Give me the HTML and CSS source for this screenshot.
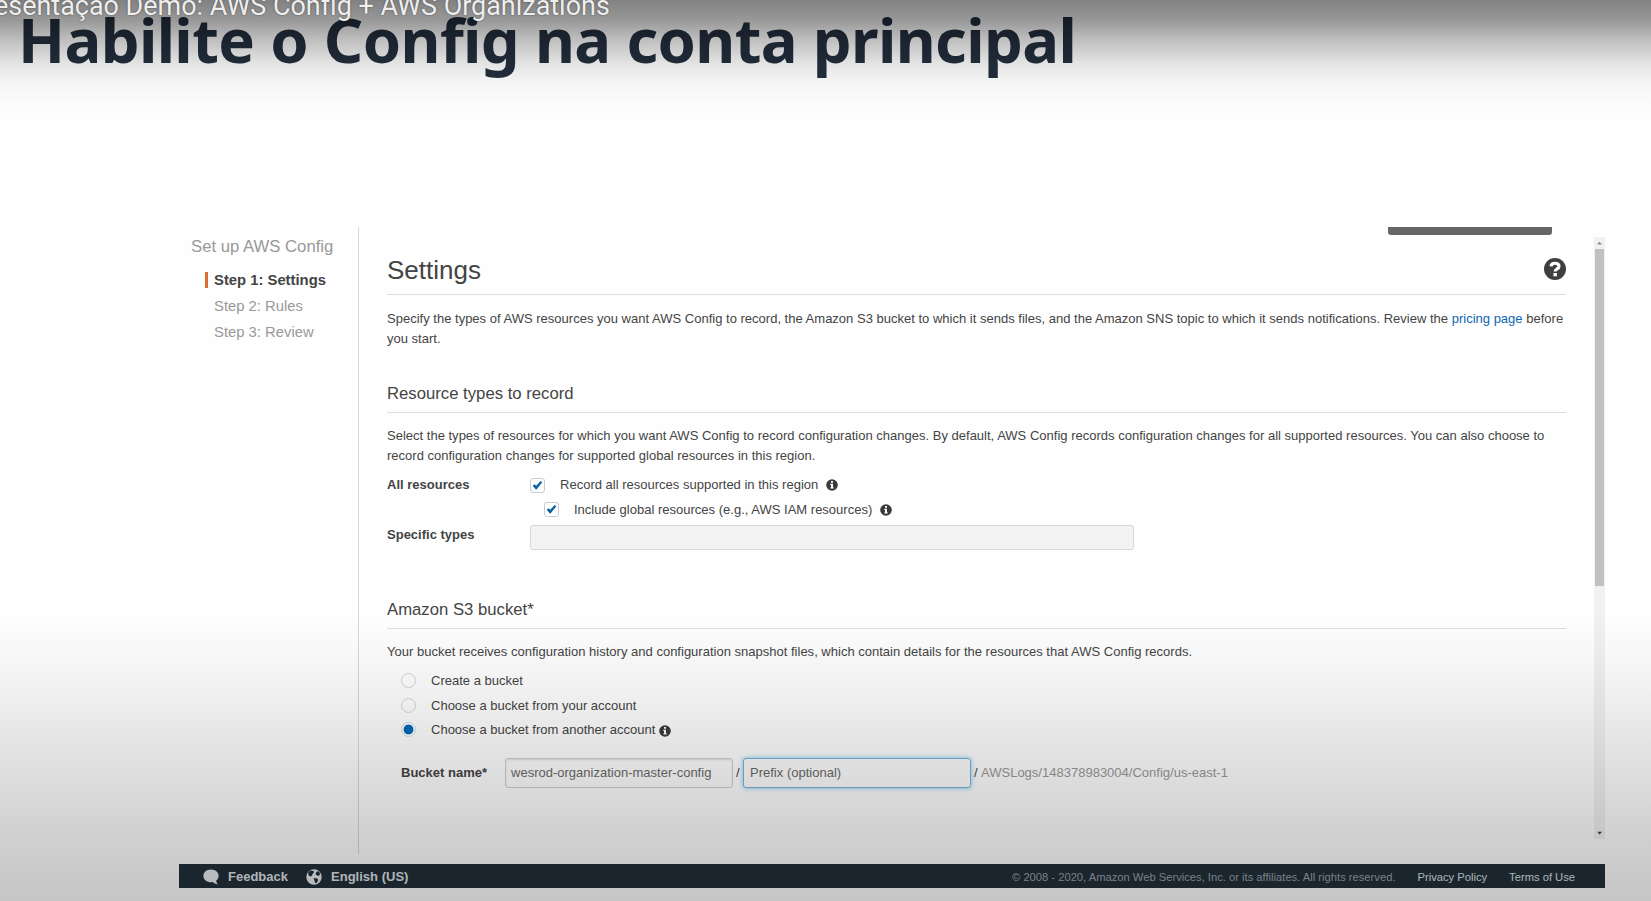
FILE: index.html
```html
<!DOCTYPE html>
<html lang="pt">
<head>
<meta charset="utf-8">
<title>AWS Config + AWS Organizations</title>
<link rel="stylesheet" href="styles.css">
</head>
<body>
<svg class="defs" width="0" height="0">
  <symbol id="info" viewBox="0 0 12 12"><circle cx="6" cy="6" r="5.8" fill="#3a3a3a"/><path d="M5 2h2v1.7H5zM4.3 4.8H7v3.6h.8v1.2H4.3V8.4H5V6h-.7z" fill="#fff"/></symbol>
  <symbol id="check" viewBox="0 0 11 11"><path d="M.8 5.700 2.700 4.300 4.200 5.700 8.600.9 10.300 2.200 4.500 9.600H3.800z" fill="#0a62a5"/></symbol>
</svg>
<div class="slide">
  <h1 class="slide-title">Habilite o Config na conta principal</h1>
  <div class="console">
    <div class="workspace">
      <nav class="steps">
        <div class="steps-title">Set up AWS Config</div>
        <ul class="steps-list">
          <li class="step step-current">Step 1: Settings</li>
          <li class="step">Step 2: Rules</li>
          <li class="step">Step 3: Review</li>
        </ul>
      </nav>
      <main class="content">
        <div class="tab-remnant"></div>
        <header class="page-head">
          <h2 class="page-title">Settings</h2>
          <svg class="help" viewBox="0 0 22 22"><circle cx="11" cy="11" r="11" fill="#3f3f3f"/><path d="M7 8.3C7.2 6 8.8 5.3 11 5.3c2.400 0 4 1.200 4 3.100 0 2.600-3.900 2.400-3.900 5.200" fill="none" stroke="#fff" stroke-width="3.100"/><path d="M9.400 15h3.500v3.300H9.400z" fill="#fff"/></svg>
        </header>
        <p class="text intro">Specify the types of AWS resources you want AWS Config to record, the Amazon S3 bucket to which it sends files, and the Amazon SNS topic to which it sends notifications. Review the <a class="link">pricing page</a> before<br>you start.</p>
        <h3 class="section-title">Resource types to record</h3>
        <p class="text types-text">Select the types of resources for which you want AWS Config to record configuration changes. By default, AWS Config records configuration changes for all supported resources. You can also choose to<br>record configuration changes for supported global resources in this region.</p>
        <div class="field-grid">
          <div class="field-label">All resources</div>
          <div class="checks">
            <label class="check-row"><span class="box"><svg class="tick"><use href="#check"/></svg></span><span>Record all resources supported in this region</span><svg class="info"><use href="#info"/></svg></label>
            <label class="check-row nested"><span class="box"><svg class="tick"><use href="#check"/></svg></span><span>Include global resources (e.g., AWS IAM resources)</span><svg class="info"><use href="#info"/></svg></label>
          </div>
          <div class="field-label">Specific types</div>
          <div class="types-input"></div>
        </div>
        <h3 class="section-title">Amazon S3 bucket*</h3>
        <p class="text bucket-text">Your bucket receives configuration history and configuration snapshot files, which contain details for the resources that AWS Config records.</p>
        <div class="radios">
          <label class="radio-row"><span class="radio"></span><span>Create a bucket</span></label>
          <label class="radio-row"><span class="radio"></span><span>Choose a bucket from your account</span></label>
          <label class="radio-row"><span class="radio radio-on"></span><span>Choose a bucket from another account</span><svg class="info info-low"><use href="#info"/></svg></label>
        </div>
        <div class="bucket-row">
          <span class="bucket-label">Bucket name*</span>
          <span class="input">wesrod-organization-master-config</span>
          <span class="slash">/</span>
          <span class="input input-focus">Prefix (optional)</span>
          <span class="slash">/</span>
          <span class="path">AWSLogs/148378983004/Config/us-east-1</span>
        </div>
      </main>
      <div class="scrollbar">
        <svg class="arrow" viewBox="0 0 11 12"><path d="M3 7.500h5L5.500 4.700z" fill="#8a8a8a"/></svg>
        <div class="thumb"></div>
        <svg class="arrow arrow-down" viewBox="0 0 11 12"><path d="M3.200 4.700h4.800L5.600 7.600z" fill="#404040"/></svg>
      </div>
    </div>
    <footer class="footer">
      <svg class="foot-icon" viewBox="0 0 16 16"><path d="M8 .5c4.400 0 7.600 2.800 7.600 6.300 0 2.400-1.200 4-2.600 5l1.600 3.700c-2-.3-3.800-1.200-4.900-2.400C4.400 13.700.4 10.900.4 6.900.4 3.300 3.600.5 8 .5z" fill="#e9ecee"/></svg>
      <span class="foot-main foot-feedback">Feedback</span>
      <svg class="foot-icon" viewBox="0 0 16 16"><circle cx="8" cy="8" r="7.700" fill="#e9ecee"/><path d="M2.200 3 4.500 1.500 7.500 2 8 3.500 6.500 5 6 6.800 4.200 7.500 2.500 6.200zM10 3.500l2-1.500 2 2-.5 2.500-2 .3-1.800-1.400zM7.500 9l3.800.5 1 1.500-1.800 3.300-1.500-.6-.5-2.200z" fill="#222f39"/></svg>
      <span class="foot-main">English (US)</span>
      <span class="copyright">© 2008 - 2020, Amazon Web Services, Inc. or its affiliates. All rights reserved.</span>
      <a class="foot-link privacy">Privacy Policy</a>
      <a class="foot-link">Terms of Use</a>
    </footer>
  </div>
  <div class="shade shade-top"></div>
  <div class="shade shade-bottom"></div>
  <div class="video-title">esentação Demo: AWS Config + AWS Organizations</div>
</div>
</body>
</html>
```
FILE: styles.css
```css
* { box-sizing: border-box; }
body { margin: 0; background: #fefefe; }
h1, h2, h3, p, ul { margin: 0; padding: 0; font-weight: normal; }
.defs { position: absolute; }
.slide {
  position: relative;
  width: 1651px;
  height: 901px;
  overflow: hidden;
  background: #fefefe;
  font: 13px/19.500px "Liberation Sans", Arial, sans-serif;
  letter-spacing: 0.007px;
  color: #444;
}
.slide-title {
  height: 227px;
  padding-left: 18px;
  font: bold 61.500px/78px "Noto Sans", sans-serif;
  letter-spacing: -0.620px;
  word-spacing: 0.500px;
  color: #232f3e;
  white-space: nowrap;
}
.console { width: 1426px; margin-left: 179px; }
.workspace { display: flex; height: 637px; }

.steps {
  width: 180px;
  height: 627px;
  padding: 9px 0 0 12px;
  border-right: 1px solid #d9d9d9;
  color: #999;
}
.steps-title { font-size: 16.700px; line-height: 22px; }
.steps-list { list-style: none; margin-top: 9px; padding-left: 14px; font-size: 14.800px; }
.step { height: 26px; line-height: 26px; padding-left: 9px; }
.step-current {
  font-weight: bold;
  color: #444;
  background: linear-gradient(#d9702f, #d9702f) 0 5px / 3px 16px no-repeat;
}

.content { width: 1235px; padding-left: 28px; }
.tab-remnant { width: 164px; height: 8px; margin-left: 1001px; background: #666; border-radius: 0 0 3px 3px; }
.page-head {
  display: flex;
  justify-content: space-between;
  width: 1179px;
  height: 60px;
  padding-top: 19px;
  border-bottom: 1px solid #ddd;
}
.page-title { font-size: 26px; line-height: 32px; }
.help { width: 22px; height: 22px; margin-top: 4px; }
.text { white-space: nowrap; }
.link { color: #0f66b3; }
.intro { margin-top: 14px; }
.section-title {
  width: 1179px;
  height: 29px;
  font-size: 16.700px;
  line-height: 20px;
  border-bottom: 1px solid #ddd;
}
.intro + .section-title { margin-top: 36px; }
.types-text { margin-top: 13px; }

.field-grid {
  display: grid;
  grid-template-columns: 143px 604px;
  grid-template-rows: 50px 25px;
  margin: 10px 0 50px;
}
.field-label { font-weight: bold; line-height: 20px; }
.check-row { display: flex; align-items: center; height: 24.500px; line-height: 20px; margin-top: -2px; }
.check-row + .check-row { margin-top: 0; }
.nested { padding-left: 14px; }
.box {
  display: flex;
  width: 15px;
  height: 15px;
  margin-right: 15px;
  border: 1px solid #c8ccd0;
  border-radius: 3px;
  background: #fff;
}
.tick { width: 11px; height: 11px; margin: 1px; }
.info { width: 12px; height: 12px; margin-left: 8px; }
.info-low { margin: 3px 0 0 4px; }
.types-input { height: 25px; border: 1px solid #d8d8d8; border-radius: 3px; background: #f3f3f3; }

.bucket-text { margin-top: 13px; }
.radios { margin: 7px 0 0 14px; }
.radio-row { display: flex; align-items: center; height: 24.500px; }
.radio {
  width: 15px;
  height: 15px;
  margin-right: 15px;
  border: 1px solid #d4d4d4;
  border-radius: 50%;
}
.radio-on { background: radial-gradient(circle, #0068b5 4.500px, #fff 5.300px); border-color: #cfdde7; }
.bucket-row { display: flex; align-items: center; height: 30px; margin: 16px 0 0 14px; white-space: nowrap; }
.bucket-label { width: 104px; font-weight: bold; }
.input {
  width: 228px;
  height: 30px;
  padding-left: 5px;
  line-height: 28px;
  border: 1px solid #d0d0d0;
  border-radius: 3px;
  background: #fdfdfd;
  color: #6a6a6a;
  box-shadow: inset 0 1px 2px rgba(0, 0, 0, 0.12);
}
.slash { width: 10px; padding-left: 3px; }
.input-focus { border: 1px solid #74b6da; box-shadow: 0 0 5px rgba(100, 190, 235, 0.8); padding-left: 6px; }
.path { color: #999; }

.scrollbar {
  display: flex;
  flex-direction: column;
  justify-content: space-between;
  align-items: center;
  width: 11px;
  height: 602px;
  margin-top: 10px;
  background: #f1f1f1;
}
.arrow { width: 11px; height: 12px; }
.thumb { width: 9px; height: 337px; margin-bottom: auto; background: #c1c1c1; }

.footer {
  display: flex;
  align-items: center;
  height: 24px;
  padding: 2px 30px 0 24px;
  background: #222f39;
  white-space: nowrap;
}
.foot-icon { width: 16px; height: 16px; margin-right: 9px; }
.foot-main { font-weight: bold; color: #dfe3e6; }
.foot-feedback { margin-right: 18px; }
.copyright { margin-left: auto; padding-top: 1px; font-size: 11.180px; color: #9aa2ab; }
.foot-link { padding-top: 1px; font-size: 11.180px; color: #dde0e3; }
.privacy { margin: 0 22px; }

.shade { position: absolute; left: 0; width: 100%; }
.shade-top {
  top: 0;
  height: 120px;
  background: linear-gradient(rgba(0,0,0,.49), rgba(0,0,0,.4) 17%, rgba(0,0,0,.25) 33%, rgba(0,0,0,.11) 52%, rgba(0,0,0,.04) 68%, rgba(0,0,0,.01) 85%, rgba(0,0,0,0));
}
.shade-bottom {
  bottom: 0;
  height: 285px;
  background: linear-gradient(rgba(0,0,0,0), rgba(0,0,0,.05) 25%, rgba(0,0,0,.11) 48%, rgba(0,0,0,.18) 77%, rgba(0,0,0,.225));
}
.video-title {
  position: absolute;
  top: -10px;
  left: -6px;
  font: 26.930px/32px Roboto, sans-serif;
  color: #eee;
  text-shadow: 0 0 2px rgba(0, 0, 0, 0.5);
  white-space: nowrap;
}
```
